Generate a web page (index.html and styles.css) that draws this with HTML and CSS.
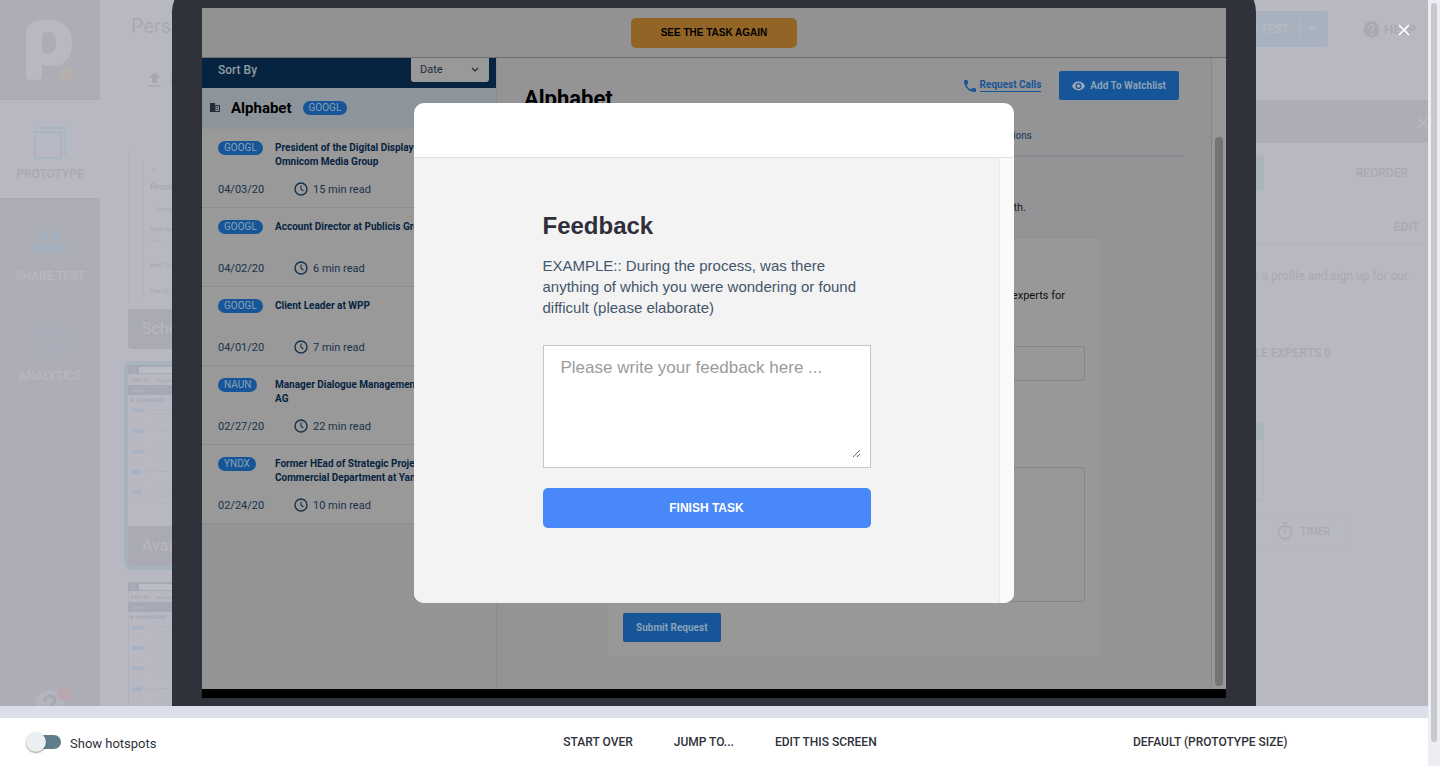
FILE: index.html
```html
<!DOCTYPE html>
<html lang="en">
<head>
<meta charset="utf-8">
<title>Prototype preview</title>
<link rel="stylesheet" href="styles.css">
</head>
<body>
<svg class="defs" aria-hidden="true">
  <symbol id="clock" viewBox="0 0 14 14"><circle cx="7" cy="7" r="6" fill="none" stroke="currentColor" stroke-width="1.4"/><path d="M7 3.5V7.2L9.4 9" fill="none" stroke="currentColor" stroke-width="1.1"/></symbol>
  <symbol id="cross" viewBox="0 0 12 12"><path d="M1 1L11 11M11 1L1 11" fill="none" stroke="currentColor" stroke-width="1.7"/></symbol>
  <symbol id="thumb" viewBox="0 0 200 161">
    <path d="M0 0H200V9H0Z" fill="#a6a8b3"/><path d="M11 2H200V8H11Z" fill="#bbbcc6"/><path d="M4 2l3 5" stroke="#b8b8c2"/>
    <g font-family="Roboto" font-size="5" fill="#a8a9b4"><text x="3" y="17" font-weight="700">Filter by</text><text x="28" y="17" font-size="4">Watchlist</text>
    <path d="M0 20H200V30H0Z" fill="#a5a9b5"/><text x="4" y="27" font-size="4" fill="#b8b8c2">Sort By</text>
    <path d="M2 34h3v3h-3z"/><text x="8" y="37" font-weight="700">Alphabet</text></g>
    <g fill="#a7b2c5"><rect x="26" y="33" width="12" height="4" rx="2"/><rect x="4" y="43.500" width="12" height="4" rx="2"/><rect x="4" y="64" width="12" height="4" rx="2"/><rect x="4" y="84.500" width="12" height="4" rx="2"/><rect x="4" y="105" width="10" height="4" rx="2"/><rect x="4" y="125.500" width="10" height="4" rx="2"/></g>
    <g stroke="#b0b1bc" stroke-width="1.200" stroke-dasharray="7 1 4 1"><path d="M19 45H80M19 49H70M19 66H80M19 86H46M19 106.500H80M19 110H23M19 127H80M19 131H80"/></g>
    <g stroke="#b3b4be"><path d="M4 56H15M24 56H43M4 76.500H15M24 76.500H43M4 97H15M24 97H43M4 117.500H15M24 117.500H43M4 138H15M24 138H43"/></g>
  </symbol>
</svg>

<div class="page">
<main class="viewer">
  <div class="app">
    <nav class="side">
      <div class="logo"><svg width="50" height="62" viewBox="0 0 50 62"><path fill="#b8b8c2" fill-rule="evenodd" d="M0 12C0 5 6 0 22 0C38 0 46 8 46 23C46 38 38 46 26 46C21 46 18 45 16 44V56Q16 60 11 60H5Q0 60 0 56ZM16 14V32Q18 34 22 34Q30 34 30 23Q30 12 22 12Q18 12 16 14Z"/><path fill="#b5afad" d="M35 60V53.500A6.500 6.500 0 1 1 41.500 60Z"/></svg></div>
      <a class="tab current" href="#"><svg width="32" height="32" viewBox="0 0 32 32" fill="none" stroke="#a8b6c4" stroke-width="2"><path d="M1 5H27V31H1ZM4 1H31V28"/></svg>PROTOTYPE</a>
      <a class="tab" href="#"><svg width="32" height="32" viewBox="0 0 32 32" fill="#a5b1bf"><circle cx="11" cy="10" r="4.500"/><circle cx="22" cy="10" r="4.500"/><path d="M0 28V23Q0 18 10 18T21 23V28Z"/><path d="M21 18Q32 18 32 23V28H23V23Q23 20 19 18Z"/></svg>SHARE TEST</a>
      <a class="tab" href="#"><svg width="32" height="32" viewBox="0 0 32 32" fill="none" stroke="#a5b1bf" stroke-width="1.800"><circle cx="16" cy="16" r="15"/><path d="M6 16A10.500 10.500 0 0 1 27 16M16.500 21L20 10"/><circle cx="16" cy="23.500" r="2.500"/></svg>ANALYTICS</a>
      <div class="support"><svg width="38" height="38" viewBox="0 0 38 38"><circle cx="15" cy="19" r="15" fill="#b4b4be"/><path d="M10 16Q10 10 15 10Q20 10 20 14Q20 17 17 18.500Q15 20 15 23" fill="none" stroke="#a8a8b2" stroke-width="3"/><circle cx="29.500" cy="8" r="7.500" fill="#b9a8b0"/></svg></div>
    </nav>
    <section class="workspace">
      <header class="top">
        <div class="project"><span class="name">Persona</span><button class="upload"><svg width="13" height="15" viewBox="0 0 13 15" fill="#a7a7b1"><path d="M6.500 0L12 6H9V11H4V6H1ZM0 13H13V14.500H0Z"/></svg>Upload</button></div>
        <div class="actions"><button class="test"><span>USER TEST</span><svg width="30" height="20" viewBox="0 0 30 20"><path d="M2.500 0V20" stroke="#b8b8c2"/><path d="M10 8H19L14.500 12.500Z" fill="#b8b8c2"/></svg></button>
        <a class="help" href="#"><svg width="17" height="17" viewBox="0 0 17 17"><circle cx="8.500" cy="8.500" r="8.200" fill="#a9a9b3"/><path d="M6 7Q6 4 8.500 4Q11 4 11 6.500Q11 7.800 9.300 8.800Q8.500 9.300 8.500 10.500M8.500 12V14" fill="none" stroke="#b8b8c2" stroke-width="1.500"/></svg>HELP</a></div>
      </header>
      <div class="body">
        <div class="screens">
          <figure class="shot">
            <svg viewBox="0 0 200 159" preserveAspectRatio="xMinYMin slice"><path d="M.5 0V159M15 10V150" stroke="#b2b2bc" fill="none"/><path d="M25 18l3 3m0-3l-3 3" stroke="#aaaab4"/><g font-family="Roboto" fill="#a9a9b3"><text x="22" y="40" font-size="9" font-weight="700">Provider</text><text x="28" y="61" font-size="5">3 requests</text><g font-size="6" font-weight="700"><text x="22" y="81">Your Upcoming</text><text x="22" y="117">Wed 12/09</text><text x="22" y="143">Thu 12/10</text></g><text x="22" y="93" font-size="5" opacity=".5">Date</text></g></svg>
            <figcaption>Schedule</figcaption>
          </figure>
          <figure class="shot picked"><svg viewBox="0 0 200 161" preserveAspectRatio="xMinYMin slice"><use href="#thumb"/></svg><figcaption>Availability</figcaption></figure>
          <figure class="shot"><svg viewBox="0 0 200 161" preserveAspectRatio="xMinYMin slice"><path d="M.5 0V161" stroke="#b0b1bb"/><use href="#thumb"/></svg><figcaption>Company</figcaption></figure>
        </div>
        <aside class="panel">
          <div class="panelbar"><svg class="x"><use href="#cross"/></svg></div>
          <div class="row order"><span class="green"></span><span>REORDER</span></div>
          <div class="row edit"><span>EDIT</span></div>
          <p class="brief">Create a profile and sign up for our</p>
          <p class="goal">AVAILABLE EXPERTS 0</p>
          <div class="mini"></div>
          <div class="timer"><svg width="16" height="18" viewBox="0 0 16 18" fill="none" stroke="#aaaab4" stroke-width="1.500"><circle cx="8" cy="10.500" r="6.500"/><path d="M5.500 1H10.500M8 7V11M13 4L14.500 5.500"/></svg>TIMER</div>
        </aside>
      </div>
    </section>
  </div>

  <section class="device">
    <div class="screen">
      <div class="taskbar"><button class="again">SEE THE TASK AGAIN</button></div>
      <div class="proto">
        <div class="list">
          <div class="sort"><label for="sort">Sort By</label><div class="pick"><select id="sort"><option>Date</option></select><svg width="8" height="6" viewBox="0 0 8 6"><path d="M1 1L4 4L7 1" fill="none" stroke="#1d2c3d" stroke-width="1.200"/></svg></div></div>
          <div class="company"><svg width="10" height="10" viewBox="0 0 10 10"><path fill="#252c36" fill-rule="evenodd" d="M0 0H5V2H10V9H0ZM5.500 3V8H9V3ZM6.500 4H8V5H6.500ZM6.500 6H8V7H6.500Z"/></svg><strong>Alphabet</strong><span class="pill">GOOGL</span></div>
          <article><div class="line"><div class="tag"><span class="pill">GOOGL</span></div><h3>President of the Digital Display at<br>Omnicom Media Group</h3></div><div class="meta"><time>04/03/20</time><svg><use href="#clock"/></svg>15 min read</div></article>
          <article><div class="line"><div class="tag"><span class="pill">GOOGL</span></div><h3>Account Director at Publicis Groupe</h3></div><div class="meta"><time>04/02/20</time><svg><use href="#clock"/></svg>6 min read</div></article>
          <article><div class="line"><div class="tag"><span class="pill">GOOGL</span></div><h3>Client Leader at WPP</h3></div><div class="meta"><time>04/01/20</time><svg><use href="#clock"/></svg>7 min read</div></article>
          <article><div class="line"><div class="tag"><span class="pill">NAUN</span></div><h3>Manager Dialogue Management at<br>AG</h3></div><div class="meta"><time>02/27/20</time><svg><use href="#clock"/></svg>22 min read</div></article>
          <article><div class="line"><div class="tag"><span class="pill">YNDX</span></div><h3>Former HEad of Strategic Projects<br>Commercial Department at Yandex</h3></div><div class="meta"><time>02/24/20</time><svg><use href="#clock"/></svg>10 min read</div></article>
        </div>
        <div class="detail">
          <div class="head"><h1>Alphabet</h1><div class="tools"><a class="calls" href="#"><svg width="12" height="12" viewBox="3 3 18 18"><path fill="currentColor" d="M6.620 10.790a15.150 15.150 0 0 0 6.590 6.590l2.200-2.200a1 1 0 0 1 1.020-.240c1.120.370 2.330.570 3.570.570a1 1 0 0 1 1 1V20a1 1 0 0 1-1 1C10.610 21 3 13.390 3 4a1 1 0 0 1 1-1h3.500a1 1 0 0 1 1 1c0 1.250.200 2.450.570 3.570a1 1 0 0 1-.250 1.020z"/></svg><span>Request Calls</span></a><button class="blue"><svg width="13" height="10" viewBox="1 4 22 16"><path fill="currentColor" fill-rule="evenodd" d="M12 4.500C7 4.500 2.700 7.600 1 12c1.700 4.400 6 7.500 11 7.500s9.300-3.100 11-7.500c-1.700-4.400-6-7.500-11-7.500zM12 17a5 5 0 1 1 0-10a5 5 0 0 1 0 10zm0-8a3 3 0 1 0 0 6a3 3 0 0 0 0-6z"/></svg>Add To Watchlist</button></div></div>
          <div class="tabs"><a href="#">Transactions</a></div>
          <p class="note">growth.</p>
          <form class="card">
            <label for="topic">Request experts for</label>
            <input id="topic" type="text">
            <textarea aria-label="Details"></textarea>
            <button class="blue" type="button">Submit Request</button>
          </form>
        </div>
        <div class="track"><div class="grip"></div></div>
      </div>
    </div>
  </section>

  <section class="modal" role="dialog" aria-labelledby="fb">
    <div class="modalhead"></div>
    <div class="modalbody">
      <form class="feedback">
        <h2 id="fb">Feedback</h2>
        <p>EXAMPLE:: During the process, was there<br>anything of which you were wondering or found<br>difficult (please elaborate)</p>
        <div class="box"><textarea aria-labelledby="fb" placeholder="Please write your feedback here ..."></textarea></div>
        <button type="button">FINISH TASK</button>
      </form>
      <div class="gutter"></div>
    </div>
  </section>
  <button class="close" aria-label="Close"><svg class="x"><use href="#cross"/></svg></button>
</main>
<footer class="bar">
  <label class="hotspots"><input type="checkbox" role="switch"><span>Show hotspots</span></label>
  <div class="links"><button>START OVER</button><button>JUMP TO...</button><button>EDIT THIS SCREEN</button></div>
  <select class="size" aria-label="Size"><option>DEFAULT (PROTOTYPE SIZE)</option></select>
</footer>
</div>
<div class="scroll"><div class="handle"></div></div>
</body>
</html>
```

FILE: styles.css
```css
* { box-sizing: border-box; }
body { margin: 0; height: 100vh; display: flex; overflow: hidden; font-family: Roboto, sans-serif; background: #dcdee9; }
h1, h2, h3, p, figure { margin: 0; }
button, select, input, textarea { font-family: inherit; border: 0; background: none; padding: 0; }
a { color: inherit; text-decoration: none; }
svg { display: block; flex: none; }
.defs { display: none; }
.page { flex: 1; min-width: 0; display: flex; flex-direction: column; }

.viewer { flex: 1; min-height: 0; display: grid; grid-template: minmax(0, 1fr) / minmax(0, 1fr); overflow: hidden; }
.app, .device, .modal, .close { grid-area: 1 / 1; }
.x { width: 12px; height: 12px; }

/* Editor behind the preview */
.app { display: flex; min-height: 0; overflow: hidden; background: #b8b8c2; color: #a9a9b3; font-size: 12px; font-weight: 500; }
.side { width: 100px; flex: none; display: flex; flex-direction: column; background: #adadb6; }
.logo { height: 100px; flex: none; padding: 20px 26px; border-bottom: 1px solid #a8a8b1; }
.tab { height: 100px; flex: none; display: flex; flex-direction: column; align-items: center; gap: 12px; padding-top: 26px; border-bottom: 1px solid #a8a8b1; color: #b8b8c2; }
.tab.current { height: 99px; gap: 8px; padding-top: 27px; background: #b8b8c2; color: #a9a9b3; }
.support { margin-top: auto; height: 20px; flex: none; padding-left: 35px; overflow: visible; }
.workspace { flex: 1; min-width: 0; display: flex; flex-direction: column; }
.top { height: 100px; flex: none; display: flex; justify-content: space-between; padding: 11px 12px 0 31px; }
.project { display: flex; flex-direction: column; gap: 26px; }
.name { font-size: 20px; line-height: 30px; font-weight: 400; }
.upload { display: flex; align-items: center; gap: 8px; height: 24px; padding-left: 17px; color: #aaaab4; font-size: 12px; }
.actions { display: flex; align-items: flex-start; gap: 35px; }
.test { display: flex; align-items: center; gap: 9px; width: 170px; height: 36px; justify-content: flex-end; border-radius: 4px; background: #a8b1be; color: #b8b8c2; font-size: 12px; font-weight: 500; }
.help { display: flex; align-items: center; gap: 4px; height: 36px; font-size: 13px; }
.body { flex: 1; min-height: 0; display: flex; justify-content: space-between; }
.screens { padding: 50px 28px; display: flex; flex-direction: column; gap: 16px; }
.shot { width: 200px; flex: none; }
.shot svg { width: 100%; height: auto; }
.shot.picked { outline: 4px solid #a8b2be; border-radius: 4px; }
.shot figcaption { height: 40px; padding-left: 14px; line-height: 40px; font-size: 16px; font-weight: 400; background: #aaaab4; color: #b8b8c2; border-radius: 0 0 4px 4px; }
.panel { width: 460px; max-width: 40%; }
.panelbar { height: 43px; padding-top: 17px; display: flex; justify-content: flex-end; background: #adadb7; color: #b8b8c2; overflow: hidden; }
.panelbar .x { margin-right: -1px; }
.row { display: flex; align-items: center; justify-content: flex-end; }
.order { height: 60px; padding-right: 20px; gap: 92px; }
.green { width: 120px; height: 36px; border-radius: 4px; background: #a9b5b6; }
.edit { height: 42px; padding: 6px 9px 0 0; border-bottom: 1px solid #b1b1bb; }
.brief { padding: 21px 20px 0 0; text-align: right; font-size: 12px; line-height: 20px; font-weight: 400; }
.goal { padding: 58px 97px 0 0; text-align: right; line-height: 18px; }
.mini { width: 120px; height: 79px; margin: 60px 164px 15px auto; border: 1px solid #a9b5b6; border-top: 18px solid #a9b5b6; border-radius: 4px 4px 0 0; background: #b4b9be; }
.timer { width: 110px; height: 30px; margin: 0 81px 0 auto; padding-right: 16px; display: flex; align-items: center; justify-content: flex-end; gap: 7px; border: 1px solid #b5b5bf; font-size: 10px; }

/* Device frame */
.device { justify-self: center; width: 100%; max-width: 1084px; margin-top: -20px; padding: 28px 30px 8px; background: #2f313b; border-radius: 32px 32px 0 0; z-index: 1; min-height: 0; }
.screen { height: 100%; display: flex; flex-direction: column; padding-bottom: 9px; background: #000; overflow: hidden; }
.taskbar { height: 50px; flex: none; display: flex; align-items: center; justify-content: center; background: #929292; border-bottom: 1px solid #6d6d6f; }
.again { width: 166px; height: 30px; border-radius: 5px; background: #926526; color: #000; font: 700 10px "Liberation Sans", sans-serif; }
.proto { flex: 1; min-height: 0; display: flex; background: #949496; color: #06243f; }
.list { width: 295px; flex: none; border-right: 1px solid #8b8b8d; }
.sort { height: 30px; padding: 0 7px 7px 16px; display: flex; align-items: center; justify-content: space-between; background: #06243f; color: #929ba3; font-size: 12px; font-weight: 500; }
.pick { width: 78px; height: 24px; padding: 0 10px 0 9px; display: flex; align-items: center; justify-content: space-between; border-radius: 0 0 3px 3px; background: #999; }
.pick select { appearance: none; flex: 1; font-size: 11px; color: #1d2c3d; }
.company { height: 41px; display: flex; align-items: center; padding: 0 8px; gap: 11px; background: #8c959b; color: #000; font-size: 15px; border-bottom: 1px solid #929496; }
.pill { display: inline-block; height: 14px; padding: 0 6px; border-radius: 7px; background: #165597; color: #8ba1b7; font-size: 10px; line-height: 14px; }
article { height: 79px; padding: 12px 0 0 16px; background: #999; border-bottom: 1px solid #8d8d8f; overflow: hidden; }
.line { height: 28px; display: flex; }
.tag { width: 57px; flex: none; line-height: 14px; display: flex; }
h3 { font-size: 10px; line-height: 14px; font-weight: 700; white-space: nowrap; }
.meta { height: 14px; margin-top: 13px; display: flex; align-items: center; font-size: 11px; color: #18324a; }
.meta time { width: 76px; }
.meta svg { width: 14px; height: 14px; margin-right: 5px; }
.detail { flex: 1; min-width: 0; padding: 13px 27px 0; }
.head { display: flex; justify-content: space-between; padding-right: 5px; }
h1 { padding-top: 16px; font-size: 22px; line-height: 24px; color: #000; }
.tools { display: flex; align-items: flex-start; gap: 18px; }
.calls { display: flex; align-items: center; gap: 4px; height: 29px; color: #165597; font-size: 10px; font-weight: 700; }
.calls span { border-bottom: 1px solid #165597; line-height: 12px; }
.blue { display: flex; align-items: center; justify-content: center; gap: 5px; height: 29px; padding: 0 13px; border-radius: 2px; background: #165597; color: #8ba1b7; font-size: 10px; font-weight: 700; }
.blue svg { color: #98a8b8; }
.tabs { height: 46px; padding: 19px 152px 0 0; text-align: right; border-bottom: 2px solid #87888b; font-size: 10px; line-height: 12px; font-weight: 500; color: #33485c; }
.note { padding: 43px 158px 0 0; text-align: right; font-size: 11px; line-height: 16px; color: #1c1c1e; }
.card { display: flex; flex-direction: column; margin: 21px 83px 0 82px; padding: 50px 15px 15px 16px; background: #989898; border: 1px solid #909193; border-radius: 4px; }
.card label { text-align: right; padding-right: 20px; font-size: 11px; line-height: 16px; color: #101012; }
.card input { margin-top: 42px; height: 35px; border: 1px solid #858587; border-radius: 2px; }
.card textarea { margin-top: 86px; height: 135px; border: 1px solid #858587; border-radius: 2px; resize: none; }
.card .blue { margin-top: 11px; align-self: flex-start; }
.track { width: 15px; flex: none; padding: 79px 2px 3px 3px; background: #979797; border-left: 1px solid #868688; }
.grip { height: 100%; width: 8px; border-radius: 4px; background: #747474; }

/* Feedback dialog */
.modal { place-self: center; z-index: 2; width: 100%; max-width: 600px; min-height: 500px; display: flex; flex-direction: column; border-radius: 10px; overflow: hidden; background: #fff; font-family: "Liberation Sans", sans-serif; }
.modalhead { height: 55px; border-bottom: 1px solid #e0e0e0; }
.modalbody { flex: 1; display: flex; background: #f3f3f3; }
.feedback { flex: 1; padding: 54px 0 0; display: flex; flex-direction: column; align-items: center; }
.feedback > * { width: 328px; }
h2 { font-size: 24px; line-height: 28px; color: #2f2e3b; }
.feedback p { margin-top: 15px; font-size: 15px; line-height: 21px; color: #44566c; white-space: nowrap; }
.box { margin-top: 27px; height: 123px; padding: 9px; display: flex; border: 1px solid #c5c5c5; background: #fff; }
.box textarea { flex: 1; padding: 3px 8px; font-size: 17px; line-height: 20px; outline: 0; }
.box textarea::placeholder { color: #9b9b9b; }
.feedback button { margin-top: 20px; height: 40px; border-radius: 5px; background: #4988f8; color: #fff; font-size: 12px; font-weight: 700; }
.gutter { width: 15px; background: #fafafa; border-left: 1px solid #e8e8e8; }
.close { place-self: start end; z-index: 3; margin: 24px 18px 0 0; color: #fff; cursor: pointer; }

/* Bottom bar */
.bar { height: 48px; margin-top: 12px; flex: none; display: grid; grid-template-columns: 1fr auto 1fr; align-items: center; padding-left: 12px; background: #fff; color: #2f313b; font-size: 12px; }
.hotspots { display: flex; align-items: center; gap: 9px; padding-left: 21px; font-size: 13px; }
.hotspots span { padding-top: 3px; }
.hotspots input { appearance: none; margin: 0; width: 28px; height: 14px; border-radius: 7px; background: #607d8b; display: flex; align-items: center; }
.hotspots input::before { content: ""; flex: none; width: 20px; height: 20px; margin-left: -7px; border-radius: 50%; background: #eceff1; box-shadow: 0 1px 2px #0006; }
.links { display: flex; gap: 41px; }
.links button, .size { font-size: 12px; font-weight: 500; color: #2f313b; }
.size { appearance: none; justify-self: end; margin-right: 140px; }
.scroll { width: 12px; flex: none; padding: 3px 3px 24px; background: #eceef4; }
.handle { height: 100%; border-radius: 3px; background: #c8c9cd; }
```
